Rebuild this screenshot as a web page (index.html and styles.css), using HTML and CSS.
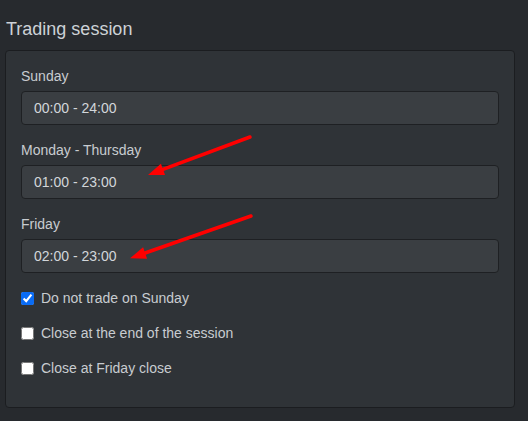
FILE: index.html
```html
<!DOCTYPE html>
<html lang="en">
<head>
<meta charset="utf-8">
<title>Trading session</title>
<link rel="stylesheet" href="styles.css">
</head>
<body>
<div class="page">
  <h2 class="title">Trading session</h2>
  <div class="panel">
    <div class="field">
      <label class="label">Sunday</label>
      <div class="input">00:00 - 24:00</div>
    </div>
    <div class="field">
      <label class="label">Monday - Thursday</label>
      <div class="input">01:00 - 23:00</div>
    </div>
    <div class="field">
      <label class="label">Friday</label>
      <div class="input">02:00 - 23:00</div>
    </div>
    <label class="check"><input type="checkbox" checked><span>Do not trade on Sunday</span></label>
    <label class="check"><input type="checkbox"><span>Close at the end of the session</span></label>
    <label class="check"><input type="checkbox"><span>Close at Friday close</span></label>
  </div>
  <svg class="annot" width="528" height="421" viewBox="0 0 528 421" aria-hidden="true">
    <line x1="250" y1="137" x2="163" y2="169.4" stroke="#ff0000" stroke-width="3.5" stroke-linecap="round"/>
    <polygon points="148,175 165.1,175.0 160.9,163.8" fill="#ff0000"/>
    <line x1="251" y1="216" x2="145.1" y2="253" stroke="#ff0000" stroke-width="3.5" stroke-linecap="round"/>
    <polygon points="130,258.3 147.1,258.7 143.1,247.3" fill="#ff0000"/>
  </svg>
</div>
</body>
</html>
```

FILE: styles.css
```css
html, body {
  margin: 0;
  padding: 0;
  background: #272a2e;
}
body {
  font-family: "Liberation Sans", Arial, sans-serif;
  color: #c8cdd2;
  width: 528px;
  height: 421px;
  overflow: hidden;
}
.page {
  position: relative;
  width: 528px;
  height: 421px;
  padding-top: 17px;
  box-sizing: border-box;
}
.title {
  margin: 0 0 9px 6px;
  font-size: 18px;
  line-height: 24px;
  font-weight: normal;
  color: #cdd2d7;
}
.panel {
  margin-left: 5px;
  width: 510px;
  box-sizing: border-box;
  background: #2f3337;
  border: 1px solid #1b1d20;
  border-radius: 4px;
  padding: 15px 15px 14px;
  display: flex;
  flex-direction: column;
}
.field {
  display: flex;
  flex-direction: column;
  gap: 5px;
  margin-bottom: 15px;
}
.label {
  font-size: 14px;
  line-height: 20px;
  color: #c8ccd0;
}
.input {
  height: 34px;
  box-sizing: border-box;
  background: #3a3e42;
  border: 1px solid #1e2023;
  border-radius: 4px;
  padding: 0 12px;
  font-size: 14px;
  line-height: 32px;
  color: #d2d6da;
}
.check {
  display: flex;
  align-items: center;
  height: 20px;
  margin-bottom: 15px;
  font-size: 14px;
  color: #c8ccd0;
}
.check input {
  width: 13px;
  height: 13px;
  margin: 0 7px 0 0;
  accent-color: #0a6cf5;
}
.annot {
  position: absolute;
  left: 0;
  top: 0;
  pointer-events: none;
}
```
